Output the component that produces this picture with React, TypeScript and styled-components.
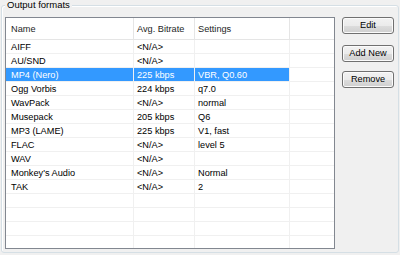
import React from "react";
import styled, { createGlobalStyle } from "styled-components";

const Global = createGlobalStyle`
  html, body { margin: 0; padding: 0; background: #f0f0f0; }
  body { font-family: "Liberation Sans", Arial, sans-serif; font-size: 9px; color: #000; }
`;

const Window = styled.div`
  width: 400px;
  height: 255px;
  box-sizing: border-box;
  padding: 5px 1px 0 1px;
  background: #f0f0f0;
`;

const Group = styled.div`
  position: relative;
  box-sizing: border-box;
  height: 248px;
  border: 1px solid #d5dfe5;
  border-radius: 3px;
  box-shadow: inset 1px 1px 0 #ffffff;
  padding: 11px 4px 3px 3px;
  display: flex;
  gap: 7px;
`;

const Legend = styled.span`
  position: absolute;
  top: -7px;
  left: 3px;
  padding: 0 2px;
  background: #f0f0f0;
  font-size: 9.5px;
  line-height: 12px;
  color: #000;
`;

const List = styled.div`
  box-sizing: border-box;
  width: 330px;
  height: 232px;
  border: 1px solid #828790;
  background: #fff;
  overflow: hidden;
`;

const Row = styled.div<{ $header?: boolean }>`
  display: grid;
  grid-template-columns: 128px 61px 95px 1fr;
  height: ${(p) => (p.$header ? "22px" : "14px")};
  box-sizing: border-box;
  border-bottom: 1px solid ${(p) => (p.$header ? "#e5e5e5" : "#f0f0f0")};
`;

const Cell = styled.div<{ $first?: boolean; $sel?: boolean; $header?: boolean; $last?: boolean }>`
  box-sizing: border-box;
  padding-left: ${(p) => (p.$first ? "5px" : "3px")};
  padding-top: ${(p) => (p.$header ? "2px" : "1px")};
  border-right: 1px solid ${(p) => (p.$last ? "transparent" : p.$header ? "#e5e5e5" : "#f0f0f0")};
  background: ${(p) => (p.$sel ? "#3399ff" : "transparent")};
  color: ${(p) => (p.$sel ? "#fff" : p.$header ? "#1e1e1e" : "#000")};
  white-space: nowrap;
  overflow: hidden;
  font-size: 9.2px;
  line-height: ${(p) => (p.$header ? "19px" : "12px")};
`;

const Buttons = styled.div`
  display: flex;
  flex-direction: column;
  width: 52px;
`;

const Button = styled.button<{ $top: number }>`
  box-sizing: border-box;
  width: 52px;
  height: 17px;
  margin-top: ${(p) => p.$top}px;
  padding: 0;
  border: 1px solid #707070;
  border-radius: 3px;
  background: linear-gradient(#f2f2f2 0%, #ebebeb 50%, #dddddd 51%, #cfcfcf 100%);
  box-shadow: inset 0 0 0 1px #fbfbfb;
  font-family: "Liberation Sans", Arial, sans-serif;
  font-size: 9.2px;
  line-height: 15px;
  color: #000;
  text-align: center;
`;

const data: [string, string, string][] = [
  ["AIFF", "<N/A>", ""],
  ["AU/SND", "<N/A>", ""],
  ["MP4 (Nero)", "225 kbps", "VBR, Q0.60"],
  ["Ogg Vorbis", "224 kbps", "q7.0"],
  ["WavPack", "<N/A>", "normal"],
  ["Musepack", "205 kbps", "Q6"],
  ["MP3 (LAME)", "225 kbps", "V1, fast"],
  ["FLAC", "<N/A>", "level 5"],
  ["WAV", "<N/A>", ""],
  ["Monkey's Audio", "<N/A>", "Normal"],
  ["TAK", "<N/A>", "2"],
  ["", "", ""],
  ["", "", ""],
  ["", "", ""],
  ["", "", ""],
];

export default function App() {
  return (
    <>
      <Global />
      <Window>
        <Group>
          <Legend>Output formats</Legend>
          <List>
            <Row $header>
              <Cell $header $first>Name</Cell>
              <Cell $header>Avg. Bitrate</Cell>
              <Cell $header>Settings</Cell>
              <Cell $header $last />
            </Row>
            {data.map((r, i) => {
              const sel = i === 2;
              return (
                <Row key={i}>
                  <Cell $first $sel={sel}>{r[0]}</Cell>
                  <Cell $sel={sel}>{r[1]}</Cell>
                  <Cell $sel={sel}>{r[2]}</Cell>
                  <Cell $last />
                </Row>
              );
            })}
          </List>
          <Buttons>
            <Button $top={0}>Edit</Button>
            <Button $top={11}>Add New</Button>
            <Button $top={9}>Remove</Button>
          </Buttons>
        </Group>
      </Window>
    </>
  );
}
